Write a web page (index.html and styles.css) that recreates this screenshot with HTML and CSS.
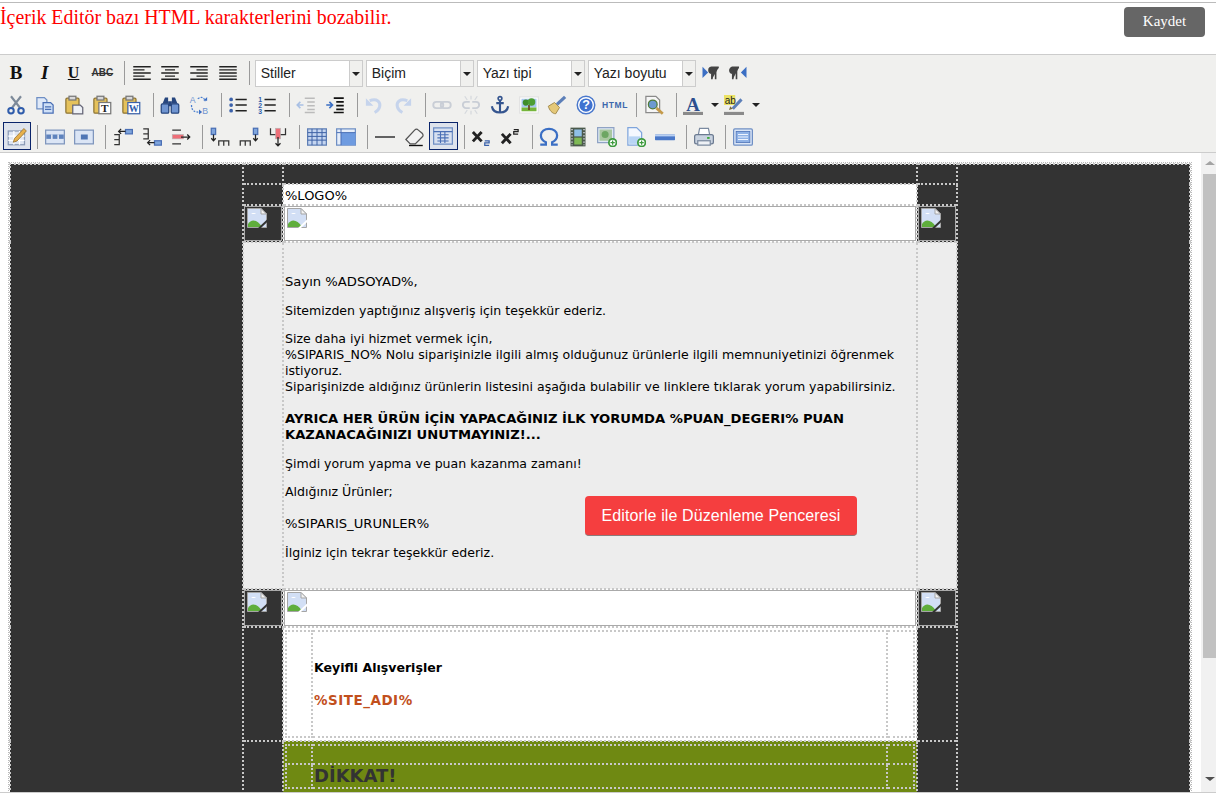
FILE: index.html
```html
<!DOCTYPE html>
<html lang="tr">
<head>
    <meta charset="UTF-8">
    <title>Mail Şablonu</title>
    <link rel="stylesheet" href="styles.css">
</head>
<body>
    <!-- icon sprite -->
    <svg class="sprite" xmlns="http://www.w3.org/2000/svg">
        <symbol id="i-left" viewBox="0 0 16 16"><path d="M1 3h14M1 5.500h9M1 8h14M1 10.500h9M1 13h14" stroke="#222" stroke-width="1.100"/></symbol>
        <symbol id="i-center" viewBox="0 0 16 16"><path d="M1 3h14M4 5.500h8M1 8h14M4 10.500h8M1 13h14" stroke="#222" stroke-width="1.100"/></symbol>
        <symbol id="i-right" viewBox="0 0 16 16"><path d="M1 3h14M6 5.500h9M1 8h14M6 10.500h9M1 13h14" stroke="#222" stroke-width="1.100"/></symbol>
        <symbol id="i-full" viewBox="0 0 16 16"><path d="M1 3h14M1 5.500h14M1 8h14M1 10.500h14M1 13h14" stroke="#222" stroke-width="1.100"/></symbol>
        <symbol id="i-ltr" viewBox="0 0 16 16"><path d="M2 3l4.500 4.500L2 12z" fill="#3b6fc4"/><path d="M9.500 13V3.500H15M12.500 13V3.500M9.500 3.500a2.300 2.300 0 0 0 0 4.600" stroke="#444" stroke-width="1.300" fill="#444"/></symbol>
        <symbol id="i-rtl" viewBox="0 0 16 16"><path d="M14 3L9.500 7.500 14 12z" fill="#3b6fc4"/><path d="M3 13V3.500h5M6 13V3.500M3 3.500a2.300 2.300 0 0 0 0 4.600" stroke="#444" stroke-width="1.300" fill="#444"/></symbol>
        <symbol id="i-cut" viewBox="0 0 16 16"><path d="M4 1l7 9M12 1L5 10" stroke="#7d8a99" stroke-width="1.700"/><circle cx="4" cy="12.500" r="2.200" fill="none" stroke="#2f5cab" stroke-width="1.600"/><circle cx="12" cy="12.500" r="2.200" fill="none" stroke="#2f5cab" stroke-width="1.600"/></symbol>
        <symbol id="i-copy" viewBox="0 0 16 16"><path d="M1.500 2h6l2 2v7h-8z" fill="#dfe9f8" stroke="#6f8fc4"/><path d="M6.500 6h6l2 2v6.500h-8z" fill="#cfe0f7" stroke="#4a6fb5"/><path d="M8 9.500h5M8 11.500h5" stroke="#4a6fb5"/></symbol>
        <symbol id="i-paste" viewBox="0 0 16 16"><rect x="1.500" y="2.500" width="10.500" height="12" rx="1" fill="#e5c25c" stroke="#8d7434"/><rect x="4" y="1" width="5.500" height="3" fill="#d8d8d8" stroke="#777"/><path d="M7 8h6l2 2v5H7z" fill="#eef1f6" stroke="#667"/></symbol>
        <symbol id="i-find" viewBox="0 0 16 16"><path d="M2 7l2-5h2.500v5zM9.500 7V2H12l2 5z" fill="#27467e"/><rect x="1" y="7" width="6" height="7.500" rx="1" fill="#6f94d0" stroke="#27467e"/><rect x="9" y="7" width="6" height="7.500" rx="1" fill="#6f94d0" stroke="#27467e"/><rect x="6.500" y="5" width="3" height="4" fill="#27467e"/></symbol>
        <symbol id="i-ul" viewBox="0 0 16 16"><path d="M6 3.500h9M6 8h9M6 12.500h9" stroke="#222" stroke-width="1.200"/><circle cx="2.500" cy="3.500" r="1.500" fill="#3b62ab"/><circle cx="2.500" cy="8" r="1.500" fill="#3b62ab"/><circle cx="2.500" cy="12.500" r="1.500" fill="#3b62ab"/></symbol>
        <symbol id="i-outdent" viewBox="0 0 16 16"><path d="M7 2.500h8M9 5.500h6M9 8.500h6M9 11.500h6M7 14h8" stroke="#bbb" stroke-width="1.200"/><path d="M6 8L1 8M3.500 5.500L1 8l2.500 2.500" stroke="#a9c0e4" fill="none" stroke-width="1.300"/></symbol>
        <symbol id="i-indent" viewBox="0 0 16 16"><path d="M7 2.500h8M9 5.500h6M9 8.500h6M9 11.500h6M7 14h8" stroke="#111" stroke-width="1.300"/><path d="M1 8h5M3.500 5.500L6 8l-2.500 2.500" stroke="#3b6fc4" fill="none" stroke-width="1.300"/></symbol>
        <symbol id="i-undo" viewBox="0 0 16 16"><path d="M4.500 4.500c6-2 9 1 8 5-.5 2-2 3.500-4 4.500" fill="none" stroke="#c6d4ec" stroke-width="2.400"/><path d="M1.500 2.500v6h6z" fill="#c6d4ec"/></symbol>
        <symbol id="i-redo" viewBox="0 0 16 16"><path d="M11.500 4.500c-6-2-9 1-8 5 .5 2 2 3.500 4 4.500" fill="none" stroke="#c6d4ec" stroke-width="2.400"/><path d="M14.500 2.500v6h-6z" fill="#c6d4ec"/></symbol>
        <symbol id="i-link" viewBox="0 0 16 16"><rect x="1" y="5.500" width="8" height="5" rx="2.500" fill="none" stroke="#c9ced6" stroke-width="1.500"/><rect x="7" y="5.500" width="8" height="5" rx="2.500" fill="none" stroke="#c9ced6" stroke-width="1.500"/></symbol>
        <symbol id="i-unlink" viewBox="0 0 16 16"><path d="M7 5.500H4a2.500 2.500 0 0 0 0 5h3M9 5.500h3a2.500 2.500 0 0 1 0 5H9" fill="none" stroke="#c9ced6" stroke-width="1.500"/><path d="M8 .500v3M8 12.500v3M3 1l2 3M13 1l-2 3M3 15l2-3M13 15l-2-3" stroke="#d5d8dd"/></symbol>
        <symbol id="i-anchor" viewBox="0 0 16 16"><circle cx="8" cy="2.800" r="1.500" fill="none" stroke="#35558f" stroke-width="1.300"/><path d="M8 4v10M5 6.500h6M1.500 9c.5 3.500 3 5 6.500 5s6-1.500 6.500-5" fill="none" stroke="#35558f" stroke-width="1.700"/></symbol>
        <symbol id="i-image" viewBox="0 0 16 16"><rect x=".5" y="1.500" width="15" height="13" fill="#fff" stroke="#e3e3e3"/><rect x="2" y="3" width="12" height="7" fill="#a8c8ee"/><rect x="2" y="10" width="12" height="3" fill="#76b53c"/><path d="M7.300 8h1.400v4H7.300z" fill="#6b4a22"/><circle cx="5.500" cy="6" r="2.500" fill="#3f8d2a"/><circle cx="10" cy="5.500" r="3" fill="#4d9e34"/></symbol>
        <symbol id="i-clean" viewBox="0 0 16 16"><path d="M1 9l5-3 4 4-3 5c-3 0-5-3-6-6z" fill="#e4c878" stroke="#9c8444" stroke-width=".7"/><path d="M8 7.500L14.500 1.500" stroke="#5c7fb8" stroke-width="2.600"/></symbol>
        <symbol id="i-preview" viewBox="0 0 16 16"><path d="M1.500 1h8l3 3v10h-11z" fill="#f6f6f6" stroke="#8a8a8a"/><circle cx="7" cy="7.500" r="3.500" fill="#6d9ad0" stroke="#4f7a3a"/><path d="M10 10.500l5 4.500" stroke="#c49a4a" stroke-width="2.200"/></symbol>
        <symbol id="i-visual" viewBox="0 0 16 16"><rect x="1" y="4" width="13" height="11" fill="#dfe6f2" stroke="#8a9ab5"/><path d="M1 8h13M1 11.500h13M5.500 4v11M10 4v11" stroke="#fff"/><path d="M6 10l7.500-8 2 2L8 12l-3 1z" fill="#e7b04a" stroke="#8d6a2a" stroke-width=".6"/></symbol>
        <symbol id="i-row" viewBox="0 0 16 16"><rect x=".5" y="2.500" width="15" height="11" fill="#dbe5f5" stroke="#7f96bd"/><rect x="1" y="6" width="14" height="3.500" fill="#5f83bd"/><path d="M5.500 6v3.500M10.500 6v3.500" stroke="#fff"/></symbol>
        <symbol id="i-cell" viewBox="0 0 16 16"><rect x=".5" y="2.500" width="15" height="11" fill="#dbe5f5" stroke="#7f96bd"/><rect x="5.500" y="6" width="5.500" height="4" fill="#4f76b5"/></symbol>
        <symbol id="i-rowb" viewBox="0 0 16 16"><path d="M1 6h4v8H1M1 10h4" fill="none" stroke="#333"/><rect x="10" y="2" width="5.500" height="3.500" fill="#7fa5dc" stroke="#4a6fb5"/><path d="M4.500 3.500H10M6.500 1.500l-2 2 2 2" fill="none" stroke="#222"/></symbol>
        <symbol id="i-rowa" viewBox="0 0 16 16"><path d="M1 1.500h4v8H1M1 5.500h4" fill="none" stroke="#333"/><rect x="10" y="11" width="5.500" height="3.500" fill="#7fa5dc" stroke="#4a6fb5"/><path d="M4.500 12.500H10M6.500 10.500l-2 2 2 2" fill="none" stroke="#222"/></symbol>
        <symbol id="i-rowd" viewBox="0 0 16 16"><path d="M1 2.500h7M1 13.500h7" stroke="#333"/><rect x="1" y="6" width="9" height="3.500" fill="#ee6f78" stroke="#b5b5b5" stroke-width=".5"/><path d="M8 8h7M13 6l2 2-2 2" fill="none" stroke="#222"/></symbol>
        <symbol id="i-colb" viewBox="0 0 16 16"><rect x="1" y="1" width="3.500" height="5" fill="#7fa5dc" stroke="#4a6fb5"/><path d="M2.800 6v5M1 9l1.800 2 1.800-2" fill="none" stroke="#222"/><path d="M7 15v-4h8v4M11 11v4" fill="none" stroke="#333"/></symbol>
        <symbol id="i-cola" viewBox="0 0 16 16"><rect x="11.500" y="1" width="3.500" height="5" fill="#7fa5dc" stroke="#4a6fb5"/><path d="M13.200 6v5M11.400 9l1.800 2 1.800-2" fill="none" stroke="#222"/><path d="M1 15v-4h8v4M5 11v4" fill="none" stroke="#333"/></symbol>
        <symbol id="i-cold" viewBox="0 0 16 16"><path d="M2 1v5h12V1" fill="none" stroke="#333"/><rect x="6" y="1" width="4" height="8.500" fill="#ee6f78" stroke="#b5b5b5" stroke-width=".5"/><path d="M8 8v7M6 13l2 2 2-2" fill="none" stroke="#222"/></symbol>
        <symbol id="i-table" viewBox="0 0 16 16"><rect x=".5" y="1.500" width="15" height="13" fill="#c4d5f0" stroke="#5f7fb5"/><path d="M.5 4.500h15M.5 7.500h15M.5 10.500h15M4 1.500v13M8 1.500v13M12 1.500v13" stroke="#3e62a5" stroke-width=".8"/></symbol>
        <symbol id="i-props" viewBox="0 0 16 16"><rect x=".5" y="1.500" width="15" height="13" fill="#e6eefa" stroke="#6f8fc4"/><rect x="4" y="4.500" width="11.500" height="10" fill="#6e9be0"/><path d="M.5 4.500h15M4 1.500v13" stroke="#4a6fb5" stroke-width=".8"/></symbol>
        <symbol id="i-hr" viewBox="0 0 16 16"><path d="M0 8h16" stroke="#333" stroke-width="1.200"/></symbol>
        <symbol id="i-erase" viewBox="0 0 16 16"><path d="M1.500 10l7-7.500c1-1 2-1 3 0l3 2.500c1 1 1 2 0 3L9 13.500H5z" fill="#f2f2f2" stroke="#555"/><path d="M4 14.800h11" stroke="#111" stroke-width="1.100"/></symbol>
        <symbol id="i-tblline" viewBox="0 0 16 16"><rect x=".5" y="1.500" width="15" height="13" fill="#d7e0f0" stroke="#6f8fc4"/><path d="M.5 4.500h15M3.500 7h9M3.500 9.500h9M3.500 12h9M6 4.500v9M9.500 4.500v9" stroke="#4a6fb5" stroke-width=".9"/></symbol>
        <symbol id="i-sub" viewBox="0 0 16 16"><path d="M1.500 4l7 7.500M8.500 4l-7 7.500" stroke="#222" stroke-width="2.300"/><path d="M11 11h3.500v1.700H11v2h3.500" fill="none" stroke="#3b62ab"/></symbol>
        <symbol id="i-sup" viewBox="0 0 16 16"><path d="M1.500 5.500l7 7.500M8.500 5.500l-7 7.500" stroke="#222" stroke-width="2.300"/><path d="M11 2h3.500v1.700H11v2h3.500" fill="none" stroke="#222"/></symbol>
        <symbol id="i-omega" viewBox="0 0 16 16"><path d="M1 14h4.500v-1.800C3 11 1.500 9 1.500 6.500 1.500 3.500 4.500 1.500 8 1.500s6.500 2 6.500 5c0 2.500-1.500 4.500-4 5.700V14H15" fill="none" stroke="#3b6fc4" stroke-width="1.800"/></symbol>
        <symbol id="i-media" viewBox="0 0 16 16"><rect x="2" y=".5" width="12" height="15" fill="#4b5a4c"/><rect x="5" y="2" width="6" height="5.500" fill="#8fc0e8"/><rect x="5" y="8.500" width="6" height="5.500" fill="#7fba55"/><path d="M3.200 1.500v13M12.800 1.500v13" stroke="#dde" stroke-width="1.100" stroke-dasharray="1 1.500"/></symbol>
        <symbol id="i-imgadd" viewBox="0 0 16 16"><rect x=".5" y=".5" width="13" height="12" fill="#dfe8f5" stroke="#8fa3c4"/><rect x="2" y="2" width="10" height="9" fill="#a9c7a0"/><circle cx="6.500" cy="6" r="2.800" fill="#6da662"/><circle cx="12.500" cy="12.500" r="3" fill="#fff" stroke="#3d9a3d" stroke-width="1.400"/><path d="M10.800 12.500h3.400M12.500 10.800v3.400" stroke="#3d9a3d"/></symbol>
        <symbol id="i-fileadd" viewBox="0 0 16 16"><path d="M1.500 .5h7l4 4v10h-11z" fill="#f4f8fe" stroke="#7fa5dc"/><rect x="2.500" y="7.500" width="9" height="6" fill="#b8d4f4"/><circle cx="12.500" cy="12.500" r="3" fill="#fff" stroke="#3d9a3d" stroke-width="1.400"/><path d="M10.800 12.500h3.400M12.500 10.800v3.400" stroke="#3d9a3d"/></symbol>
        <symbol id="i-break" viewBox="0 0 16 16"><rect x="0" y="6" width="16" height="4.500" rx=".5" fill="#4a78c8"/><rect x="0" y="6" width="16" height="1.500" fill="#b9d0f2"/></symbol>
        <symbol id="i-print" viewBox="0 0 16 16"><path d="M4.500 1h7l1 5h-9z" fill="#fff" stroke="#7b8aa0"/><rect x=".5" y="6" width="15" height="7.500" rx="1.500" fill="#c9d3e0" stroke="#6b7a90"/><rect x="3" y="11" width="10" height="3.500" fill="#eef1f5" stroke="#7b8aa0"/><rect x="10.500" y="8" width="2" height="1.500" fill="#3daa3d"/></symbol>
        <symbol id="i-fullscreen" viewBox="0 0 16 16"><rect x=".5" y="1.500" width="15" height="13" rx="1" fill="#dbe6f7" stroke="#6f8fc4"/><rect x="2.500" y="3.500" width="11" height="9" fill="#8fb2e6" stroke="#4a6fb5" stroke-width=".6"/><path d="M4 6h8M4 8h8M4 10h8" stroke="#eef4ff" stroke-width=".8"/></symbol>
        <symbol id="i-broken" viewBox="0 0 20 20"><path d="M.5 .5H14l5.500 5.500v13.500H.5z" fill="#d2dff5" stroke="#a5a5a5"/><path d="M14 .5V6h5.500z" fill="#f3f3f3" stroke="#a5a5a5"/><path d="M4 6c1-1.500 4-1.500 5 0z" fill="#fff"/><path d="M1 19v-3c3-5 9-5 14 3z" fill="#5fae3c"/><path d="M12 20.500L21 12" stroke="currentColor" stroke-width="2"/></symbol>
    </svg>

    <div class="topbar">
        <span class="warning">İçerik Editör bazı HTML karakterlerini bozabilir.</span>
        <button class="save">Kaydet</button>
    </div>

    <div class="toolbar">
        <div class="row">
            <span class="btn"><b class="glyph g-bold">B</b></span>
            <span class="btn"><i class="glyph g-italic">I</i></span>
            <span class="btn"><u class="glyph g-under">U</u></span>
            <span class="btn"><s class="glyph g-strike">ABC</s></span>
            <i class="sep"></i>
            <span class="btn"><svg><use href="#i-left"/></svg></span>
            <span class="btn"><svg><use href="#i-center"/></svg></span>
            <span class="btn"><svg><use href="#i-right"/></svg></span>
            <span class="btn"><svg><use href="#i-full"/></svg></span>
            <i class="sep"></i>
            <div class="combo"><span class="combo-label">Stiller</span><span class="combo-arrow"></span></div>
            <div class="combo"><span class="combo-label">Biçim</span><span class="combo-arrow"></span></div>
            <div class="combo"><span class="combo-label">Yazı tipi</span><span class="combo-arrow"></span></div>
            <div class="combo"><span class="combo-label">Yazı boyutu</span><span class="combo-arrow"></span></div>
            <span class="btn"><svg><use href="#i-ltr"/></svg></span>
            <span class="btn"><svg><use href="#i-rtl"/></svg></span>
        </div>
        <div class="row">
            <span class="btn"><svg><use href="#i-cut"/></svg></span>
            <span class="btn"><svg><use href="#i-copy"/></svg></span>
            <span class="btn"><svg><use href="#i-paste"/></svg></span>
            <span class="btn"><svg viewBox="0 0 16 16"><rect x="1.500" y="2.500" width="10.500" height="12" rx="1" fill="#e5c25c" stroke="#8d7434"/><rect x="4" y="1" width="5.500" height="3" fill="#d8d8d8" stroke="#777"/><rect x="5.500" y="6" width="9.500" height="9" fill="#fff" stroke="#777"/><text x="10.200" y="13.800" text-anchor="middle" class="t-t">T</text></svg></span>
            <span class="btn"><svg viewBox="0 0 16 16"><rect x="1.500" y="2.500" width="10.500" height="12" rx="1" fill="#e5c25c" stroke="#8d7434"/><rect x="4" y="1" width="5.500" height="3" fill="#d8d8d8" stroke="#777"/><rect x="5.500" y="6" width="9.500" height="9" fill="#fff" stroke="#3b62ab"/><text x="10.200" y="13.800" text-anchor="middle" class="t-w">W</text></svg></span>
            <i class="sep"></i>
            <span class="btn"><svg><use href="#i-find"/></svg></span>
            <span class="btn"><svg viewBox="0 0 16 16"><text x="0.500" y="6.500" class="t-r">A</text><text x="10.500" y="15" class="t-r">B</text><path d="M2 8c0 5 3 6 7 5.500M7 3c3-2 5-1 6 2" fill="none" stroke="#4a7fd0" stroke-dasharray="1.500 1"/><path d="M8 11.500l2.500 2-2.500 2zM14.500 1.500v3h-3z" fill="#3b6fc4"/></svg></span>
            <i class="sep"></i>
            <span class="btn"><svg><use href="#i-ul"/></svg></span>
            <span class="btn"><svg viewBox="0 0 16 16"><path d="M6 3.500h9M6 8h9M6 12.500h9" stroke="#222" stroke-width="1.200"/><text x="2.500" y="5.500" text-anchor="middle" class="t-n">1</text><text x="2.500" y="10" text-anchor="middle" class="t-n">2</text><text x="2.500" y="14.800" text-anchor="middle" class="t-n">3</text></svg></span>
            <i class="sep"></i>
            <span class="btn"><svg><use href="#i-outdent"/></svg></span>
            <span class="btn"><svg><use href="#i-indent"/></svg></span>
            <i class="sep"></i>
            <span class="btn"><svg><use href="#i-undo"/></svg></span>
            <span class="btn"><svg><use href="#i-redo"/></svg></span>
            <i class="sep"></i>
            <span class="btn"><svg><use href="#i-link"/></svg></span>
            <span class="btn"><svg><use href="#i-unlink"/></svg></span>
            <span class="btn"><svg><use href="#i-anchor"/></svg></span>
            <span class="btn"><svg><use href="#i-image"/></svg></span>
            <span class="btn"><svg><use href="#i-clean"/></svg></span>
            <span class="btn"><svg viewBox="0 0 16 16"><circle cx="8" cy="8" r="7" fill="#fff" stroke="#4a78cc" stroke-width="1.200"/><circle cx="8" cy="8" r="5.300" fill="#3f72d0"/><text x="8" y="11.500" text-anchor="middle" class="t-q">?</text></svg></span>
            <span class="btn"><span class="g-html">HTML</span></span>
            <i class="sep"></i>
            <span class="btn"><svg><use href="#i-preview"/></svg></span>
            <i class="sep"></i>
            <span class="btn split"><svg viewBox="0 0 16 16"><text x="8" y="12.500" text-anchor="middle" class="t-a">A</text><rect x="0" y="13.500" width="16" height="2.500" fill="#8a8a8a"/></svg><b class="caret"></b></span>
            <span class="btn split"><svg viewBox="0 0 16 16"><rect x="0" y="0" width="9" height="8" fill="#ebe264"/><text x="0.500" y="7" class="t-ab">ab</text><path d="M7 11L14 3.500" stroke="#5c7fb8" stroke-width="2.400"/><path d="M5 9c1 1 2 2 2 2l-3 1z" fill="#7a6a3a"/><rect x="0" y="13.500" width="16" height="2.500" fill="#8a8a8a"/></svg><b class="caret"></b></span>
        </div>
        <div class="row">
            <span class="btn on"><svg><use href="#i-visual"/></svg></span>
            <i class="sep"></i>
            <span class="btn"><svg><use href="#i-row"/></svg></span>
            <span class="btn"><svg><use href="#i-cell"/></svg></span>
            <i class="sep"></i>
            <span class="btn"><svg><use href="#i-rowb"/></svg></span>
            <span class="btn"><svg><use href="#i-rowa"/></svg></span>
            <span class="btn"><svg><use href="#i-rowd"/></svg></span>
            <i class="sep"></i>
            <span class="btn"><svg><use href="#i-colb"/></svg></span>
            <span class="btn"><svg><use href="#i-cola"/></svg></span>
            <span class="btn"><svg><use href="#i-cold"/></svg></span>
            <i class="sep"></i>
            <span class="btn"><svg><use href="#i-table"/></svg></span>
            <span class="btn"><svg><use href="#i-props"/></svg></span>
            <i class="sep"></i>
            <span class="btn"><svg><use href="#i-hr"/></svg></span>
            <span class="btn"><svg><use href="#i-erase"/></svg></span>
            <span class="btn on"><svg><use href="#i-tblline"/></svg></span>
            <i class="sep"></i>
            <span class="btn"><svg><use href="#i-sub"/></svg></span>
            <span class="btn"><svg><use href="#i-sup"/></svg></span>
            <i class="sep"></i>
            <span class="btn"><svg><use href="#i-omega"/></svg></span>
            <span class="btn"><svg><use href="#i-media"/></svg></span>
            <span class="btn"><svg><use href="#i-imgadd"/></svg></span>
            <span class="btn"><svg><use href="#i-fileadd"/></svg></span>
            <span class="btn"><svg><use href="#i-break"/></svg></span>
            <i class="sep"></i>
            <span class="btn"><svg><use href="#i-print"/></svg></span>
            <i class="sep"></i>
            <span class="btn"><svg><use href="#i-fullscreen"/></svg></span>
        </div>
    </div>

    <div class="editor">
        <div class="frame">
            <table class="mail">
                <colgroup><col class="c-side"><col class="c-gut"><col class="c-mid"><col class="c-gut"><col class="c-side"></colgroup>
                <tr class="r-top">
                    <td class="dark" rowspan="7"></td>
                    <td class="dark"></td><td class="dark"></td><td class="dark"></td>
                    <td class="dark" rowspan="7"></td>
                </tr>
                <tr class="r-logo">
                    <td class="dark"></td><td class="white logo">%LOGO%</td><td class="dark"></td>
                </tr>
                <tr class="r-img">
                    <td class="dark boxed"><svg class="broken"><use href="#i-broken"/></svg></td>
                    <td class="white boxed"><svg class="broken"><use href="#i-broken"/></svg></td>
                    <td class="dark boxed"><svg class="broken"><use href="#i-broken"/></svg></td>
                </tr>
                <tr class="r-body">
                    <td class="grey"></td>
                    <td class="grey letter">
                        <p class="caps">Sayın %ADSOYAD%,</p>
                        <p class="less">Sitemizden yaptığınız alışveriş için teşekkür ederiz.</p>
                        <p class="more">Size daha iyi hizmet vermek için,<br>%SIPARIS_NO% Nolu siparişinizle ilgili almış olduğunuz ürünlerle ilgili memnuniyetinizi öğrenmek istiyoruz.<br>Siparişinizde aldığınız ürünlerin listesini aşağıda bulabilir ve linklere tıklarak yorum yapabilirsiniz.</p>
                        <p class="caps"><b>AYRICA HER ÜRÜN İÇİN YAPACAĞINIZ İLK YORUMDA %PUAN_DEGERI% PUAN KAZANACAĞINIZI UNUTMAYINIZ!...</b></p>
                        <p class="less">Şimdi yorum yapma ve puan kazanma zamanı!</p>
                        <p class="more">Aldığınız Ürünler;</p>
                        <p class="caps">%SIPARIS_URUNLER%</p>
                        <p>İlginiz için tekrar teşekkür ederiz.</p>
                    </td>
                    <td class="grey"></td>
                </tr>
                <tr class="r-img2">
                    <td class="dark boxed"><svg class="broken"><use href="#i-broken"/></svg></td>
                    <td class="white boxed"><svg class="broken"><use href="#i-broken"/></svg></td>
                    <td class="dark boxed"><svg class="broken"><use href="#i-broken"/></svg></td>
                </tr>
                <tr class="r-thanks">
                    <td class="dark"></td>
                    <td class="white nest">
                        <table class="inner inner-thanks">
                            <colgroup><col class="c-in-l"><col><col class="c-in-r"></colgroup>
                            <tr>
                                <td></td>
                                <td class="thanks">
                                    <p><b>Keyifli Alışverişler</b></p>
                                    <p class="site"><b>%SITE_ADI%</b></p>
                                </td>
                                <td></td>
                            </tr>
                        </table>
                    </td>
                    <td class="dark"></td>
                </tr>
                <tr class="r-notice">
                    <td class="dark"></td>
                    <td class="green nest">
                        <table class="inner">
                            <colgroup><col class="c-in-l"><col><col class="c-in-r"></colgroup>
                            <tr class="r-notice-top"><td></td><td></td><td></td></tr>
                            <tr>
                                <td></td>
                                <td class="notice">DİKKAT!</td>
                                <td></td>
                            </tr>
                        </table>
                    </td>
                    <td class="dark"></td>
                </tr>
            </table>
        </div>
        <div class="scrollbar">
            <span class="arrow-up"></span>
            <span class="thumb"></span>
            <span class="arrow-down"></span>
        </div>
    </div>

    <button class="popup">Editorle ile Düzenleme Penceresi</button>
</body>
</html>
```

FILE: styles.css
```css
html, body {
    margin: 0;
    height: 793px;
    overflow: hidden;
    background-color: #fff;
}
.sprite {
    position: absolute;
    width: 0;
    height: 0;
}
.topbar {
    display: flex;
    justify-content: space-between;
    align-items: flex-start;
    height: 51px;
    margin-top: 2px;
    border-top: 1px solid #bbb;
}
.warning {
    font-family: "Liberation Serif", serif;
    font-size: 19.9px;
    line-height: 29px;
    color: #f00;
}
.save {
    width: 81px;
    height: 30px;
    margin: 4px 11px 0 0;
    padding: 0 0 2px;
    background-color: #666;
    color: #fff;
    border: none;
    border-radius: 4px;
    font-family: "Liberation Serif", serif;
    font-size: 15px;
}
.toolbar {
    box-sizing: border-box;
    height: 99px;
    padding: 2px 0 0 1.6px;
    background-color: #f0f0ee;
    border-top: 1px solid #ccc;
    border-bottom: 1px solid #ccc;
}
.row {
    display: flex;
    align-items: center;
    height: 32px;
}
.btn {
    box-sizing: border-box;
    display: flex;
    align-items: center;
    justify-content: center;
    flex: none;
    width: 28.8px;
    height: 28px;
}
.btn svg {
    width: 20px;
    height: 20px;
}
.btn.on {
    margin: -2px -1px 0 1px;
    background-color: #dee3ec;
    border: 1px solid #0a246a;
}
.glyph {
    color: #111;
    line-height: 20px;
}
.g-bold {
    font: bold 19px/20px "Liberation Serif", serif;
}
.g-italic {
    font: italic bold 19px/20px "Liberation Serif", serif;
}
.g-under {
    font: bold 16px/20px "Liberation Serif", serif;
}
.g-strike {
    font: bold 10px/20px "Liberation Sans", sans-serif;
    color: #333;
}
.g-html {
    font: bold 8.5px "Liberation Sans", sans-serif;
    color: #3d68ad;
    letter-spacing: .6px;
}
.split {
    width: 41px;
    justify-content: flex-start;
    padding-left: 4.4px;
}
.caret {
    margin-left: 8px;
    border-top: 4px solid #222;
    border-left: 4px solid transparent;
    border-right: 4px solid transparent;
}
.sep {
    box-sizing: border-box;
    flex: none;
    width: 10.4px;
    height: 24px;
    background: linear-gradient(#9a9a9a, #9a9a9a) 7px 0 / 1px 100% no-repeat;
}
.combo {
    box-sizing: border-box;
    display: flex;
    flex: none;
    width: 108px;
    height: 27px;
    margin-left: 3px;
    background-color: #fff;
    border: 1px solid #ccc;
    font-family: "Liberation Sans", Arial, sans-serif;
    font-size: 14px;
}
.sep + .combo {
    margin-left: 2px;
}
.combo-label {
    flex: 1;
    padding-left: 5px;
    line-height: 25px;
    color: #222;
}
.combo-arrow {
    position: relative;
    width: 12px;
    background-color: #f0f0ee;
    border-left: 1px solid #ccc;
}
.combo-arrow::after {
    content: "";
    position: absolute;
    top: 11px;
    left: 2px;
    border-top: 4px solid #222;
    border-left: 4px solid transparent;
    border-right: 4px solid transparent;
}
.t-t { font: bold 9px "Liberation Serif", serif; fill: #222; }
.t-w { font: bold 8px "Liberation Serif", serif; fill: #2f5cab; }
.t-r { font: 7px "Liberation Sans", sans-serif; fill: #6f94d0; }
.t-n { font: bold 5.5px "Liberation Sans", sans-serif; fill: #2f5cab; }
.t-q { font: bold 10px "Liberation Sans", sans-serif; fill: #fff; }
.t-a { font: bold 15px "Liberation Serif", serif; fill: #2d4f8e; }
.t-ab { font: 8px "Liberation Sans", sans-serif; fill: #222; }

.editor {
    display: flex;
    height: 639px;
    border-bottom: 1px solid #ccc;
    overflow: hidden;
}
.frame {
    flex: 1;
    padding: 10px 0 0 9px;
    overflow: hidden;
}
.mail, .inner {
    table-layout: fixed;
    border-collapse: collapse;
    font-family: "DejaVu Sans", Verdana, sans-serif;
    font-size: 12.55px;
    line-height: 16px;
    color: #000;
}
.mail {
    width: 1182px;
    outline: 1px dotted #bbb;
}
.mail td, .inner td {
    padding: 0;
    border: 2px dotted #c8c8c8;
    vertical-align: top;
}
.c-side { width: 233px; }
.c-gut { width: 40px; }
.r-top { height: 20px; }
.r-logo { height: 21px; }
.r-img { height: 37px; }
.r-body { height: 347px; }
.r-img2 { height: 38px; }
.r-thanks { height: 113px; }
.r-notice { height: 100px; }
.dark {
    background-color: #333;
    color: #333;
}
.white {
    background-color: #fff;
    color: #fff;
}
.logo {
    padding: 3px 0 0 1px !important;
    color: #000;
    font-size: 13px;
}
.grey { background-color: #ededed; }
.green { background-color: #6f8912; }
.boxed {
    outline: 1px solid #aaa;
    outline-offset: -2px;
}
.broken {
    display: block;
    width: 20px;
    height: 20px;
    margin: 2px 0 0 3px;
}
.letter {
    padding: 31px 1px 0 !important;
}
.letter p {
    margin: 0 0 13px;
}
.letter p.less {
    margin-bottom: 12px;
}
.letter p.more {
    margin-bottom: 16px;
}
.letter p.caps {
    font-size: 13.15px;
}
.nest {
    padding: 2px 1px !important;
}
.inner {
    width: 100%;
    height: 100%;
}
.inner-thanks {
    height: 108px;
}
.c-in-l { width: 26px; }
.c-in-r { width: 27px; }
.thanks {
    padding: 28px 0 0 1px !important;
    color: #000;
}
.thanks p {
    margin: 0 0 16px;
}
.thanks .site {
    color: #c24f1d;
    font-size: 13.5px;
    letter-spacing: .5px;
}
.r-notice-top { height: 19px; }
.notice {
    padding: 0 0 0 1px !important;
    font-size: 18px;
    line-height: 22px;
    font-weight: bold;
    color: #333;
}
.scrollbar {
    flex: none;
    display: flex;
    flex-direction: column;
    align-items: flex-end;
    width: 15px;
    background-color: #f1f1f1;
}
.thumb {
    width: 13px;
    height: 484px;
    margin-top: 9px;
    background-color: #c1c1c1;
}
.arrow-up {
    margin: 8px 1px 0 0;
    border-bottom: 4px solid #a3a3a3;
    border-left: 5px solid transparent;
    border-right: 5px solid transparent;
}
.arrow-down {
    margin: 119px 1px 0 0;
    border-top: 4px solid #505050;
    border-left: 5px solid transparent;
    border-right: 5px solid transparent;
}
.popup {
    position: absolute;
    top: 496px;
    left: 585px;
    width: 272px;
    height: 40px;
    padding: 0;
    background-color: #f53e3f;
    color: #fff;
    border: none;
    border-bottom: 1px solid #8a7b7b;
    border-radius: 4px;
    font-family: "Liberation Sans", Arial, sans-serif;
    font-size: 16px;
    letter-spacing: .1px;
}
```
